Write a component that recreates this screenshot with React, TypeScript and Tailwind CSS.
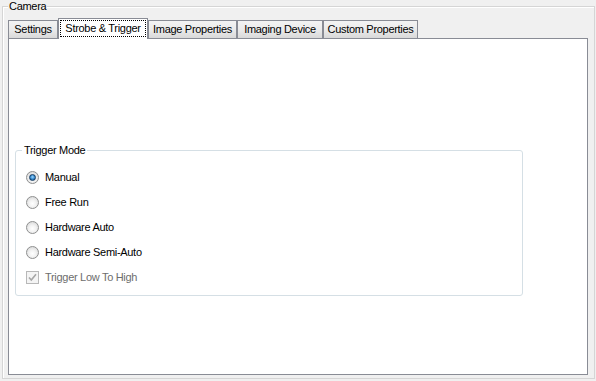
import React from "react";

const tabs = [
  { label: "Settings", w: "w-[50px]" },
  { label: "Strobe & Trigger", w: "w-[90px]", active: true },
  { label: "Image Properties", w: "w-[89px]" },
  { label: "Imaging Device", w: "w-[86px]" },
  { label: "Custom Properties", w: "w-[95px]" },
];

const modes = [
  { label: "Manual", checked: true },
  { label: "Free Run" },
  { label: "Hardware Auto" },
  { label: "Hardware Semi-Auto" },
];

const Radio: React.FC<{ checked?: boolean }> = ({ checked }) => (
  <span className="flex h-[13px] w-[13px] items-center justify-center rounded-full border border-[#8e8f8f] bg-[radial-gradient(circle_at_50%_60%,#ffffff_0%,#f2f2f2_40%,#cfcfcf_100%)]">
    {checked && (
      <span className="h-[7px] w-[7px] rounded-full border border-[#153c63] bg-[radial-gradient(circle_at_50%_40%,#9fd8ff_0%,#3a8ed1_50%,#14467a_100%)]" />
    )}
  </span>
);

const Checkbox: React.FC = () => (
  <span className="flex h-[13px] w-[13px] items-center justify-center border border-[#b8b8b8] bg-[#f4f4f4]">
    <svg width="9" height="9" viewBox="0 0 9 9">
      <path d="M1 4.5 L3.3 7 L8 1.2" fill="none" stroke="#a6a6a6" strokeWidth="1.6" />
    </svg>
  </span>
);

export default function App() {
  return (
    <div className="h-[381px] w-[596px] bg-[#f0f0f0] pl-[2px] pt-[6px] text-[11px] tracking-[-0.3px] text-black font-['Liberation_Sans',Arial,sans-serif]">
      {/* Camera group */}
      <div className="relative h-[373px] w-[593px] border border-[#d5d5d5] px-[5px] pb-[3px] pt-[11px] shadow-[inset_1px_1px_0_#ffffff]">
        <span className="absolute left-[5px] top-[-7px] bg-[#f0f0f0] px-px leading-[13px]">Camera</span>

        {/* Tabs */}
        <div className="flex h-[20px] items-end">
          {tabs.map((t) =>
            t.active ? (
              <div
                key={t.label}
                className={`relative z-10 -mb-px flex h-[21px] ${t.w} items-start justify-center border border-b-0 border-[#898c95] bg-white px-px pt-px`}
              >
                <span className="flex h-[17px] w-full items-center justify-center border border-dotted border-black leading-none">
                  {t.label}
                </span>
              </div>
            ) : (
              <div
                key={t.label}
                className={`flex h-[18px] ${t.w} items-center justify-center border border-b-0 border-[#898c95] bg-gradient-to-b from-[#f3f3f3] via-[#ebebeb] to-[#d9d9d9] leading-none`}
              >
                {t.label}
              </div>
            )
          )}
        </div>

        {/* Tab page */}
        <div className="h-[337px] w-[580px] border border-[#898c95] bg-white pl-[6px] pt-[111px]">
          <div className="relative h-[146px] w-[508px] rounded-[3px] border border-[#d5dfe5] pl-[10px] pt-[14px]">
            <span className="absolute left-[6px] top-[-7px] bg-white px-[2px] leading-[13px]">Trigger Mode</span>
            <div className="flex flex-col">
              {modes.map((m) => (
                <div key={m.label} className="flex h-[25px] items-center gap-[6px]">
                  <Radio checked={m.checked} />
                  <span>{m.label}</span>
                </div>
              ))}
              <div className="flex h-[24px] items-center gap-[6px]">
                <Checkbox />
                <span className="text-[#6d6d6d]">Trigger Low To High</span>
              </div>
            </div>
          </div>
        </div>
      </div>
    </div>
  );
}
